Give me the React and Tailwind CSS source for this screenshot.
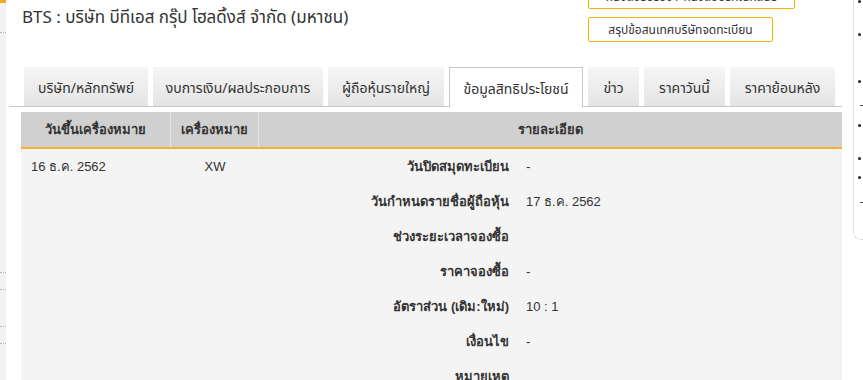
const tabs = [
  { label: 'บริษัท/หลักทรัพย์', w: 'w-[124px]' },
  { label: 'งบการเงิน/ผลประกอบการ', w: 'w-[170px]' },
  { label: 'ผู้ถือหุ้นรายใหญ่', w: 'w-[116px]' },
  { label: 'ข้อมูลสิทธิประโยชน์', w: 'w-[134px]', active: true },
  { label: 'ข่าว', w: 'w-[51px]' },
  { label: 'ราคาวันนี้', w: 'w-[81px]' },
  { label: 'ราคาย้อนหลัง', w: 'w-[105px]' },
]

const details = [
  ['วันปิดสมุดทะเบียน', '-'],
  ['วันกำหนดรายชื่อผู้ถือหุ้น', '17 ธ.ค. 2562'],
  ['ช่วงระยะเวลาจองซื้อ', ''],
  ['ราคาจองซื้อ', '-'],
  ['อัตราส่วน (เดิม:ใหม่)', '10 : 1'],
  ['เงื่อนไข', '-'],
  ['หมายเหตุ', ''],
]

const thaiUi = { fontFamily: "'Noto Sans Thai', 'Noto Sans', 'Liberation Sans', sans-serif" }
const thaiTable = { fontFamily: "Tahoma, 'Liberation Sans', 'DejaVu Sans', sans-serif" }

function LeftRail() {
  return (
    <div className="relative flex w-[6px] shrink-0 flex-col bg-[#f2f2f2]">
      <div className="absolute left-0 top-0 h-[3px] w-[6px] bg-[#f5a623]" />
      <div className="h-[33px] shrink-0 border-b border-dotted border-[#bbb]" />
      <div className="relative h-[240px] shrink-0 border-b border-dotted border-[#bbb]">
        <span className="absolute left-[-9px] top-[189px] text-[12px] leading-none text-black" style={thaiTable}>
          บ
        </span>
      </div>
      <div className="h-[17px] shrink-0 border-b border-dotted border-[#bbb]" />
      <div className="h-[37px] shrink-0 border-b border-dotted border-[#bbb]" />
      <div className="h-[17px] shrink-0 border-b border-dotted border-[#bbb]" />
    </div>
  )
}

function RightRail() {
  const dots = [0, 33, 80, 124, 157, 176]
  return (
    <div className="flex flex-1 items-start pl-[5px]">
      <div className="relative h-[240px] flex-1 rounded-bl-[8px] border-b border-l border-dotted border-[#c8c8c8]">
        {dots.map((y) => (
          <span key={y} className="absolute left-[4px] h-[3px] w-[3px] rounded-full bg-[#223]" style={{ top: y }} />
        ))}
        <span className="absolute left-[6px] top-[105px] h-px w-[3px] bg-[#555]" />
        <span className="absolute left-[6px] top-[202px] h-px w-[3px] bg-[#555]" />
      </div>
    </div>
  )
}

export default function App() {
  return (
    <div className="flex h-[380px] w-[863px] overflow-hidden bg-white text-[#333]">
      <LeftRail />

      <div className="flex w-[842px] shrink-0 flex-col">
        <div className="flex h-[67px] shrink-0 items-start">
          <h1 className="pl-[16px] pt-[8px] text-[17px] font-normal leading-[20px] text-[#333]" style={thaiUi}>
            BTS : บริษัท บีทีเอส กรุ๊ป โฮลดิ้งส์ จำกัด (มหาชน)
          </h1>
          <div className="ml-auto mr-[53px] -mt-[16px] flex flex-col items-start gap-[8px]" style={thaiUi}>
            <div className="flex h-[25px] w-[207px] items-center justify-center rounded-[2px] border border-[#f0b400] text-[12px] text-[#333]">
              หนังสือรับรอง / หนังสือบริคณห์สนธิ
            </div>
            <div className="flex h-[25px] w-[185px] items-center justify-center rounded-[2px] border border-[#f0b400] text-[12px] text-[#333]">
              สรุปข้อสนเทศบริษัทจดทะเบียน
            </div>
          </div>
        </div>

        <div className="ml-[3px] flex w-[833px] shrink-0 gap-[5px] border-b border-[#c8c8c8] pl-[15px]" style={thaiUi}>
          {tabs.map((t) =>
            t.active ? (
              <div
                key={t.label}
                className={`${t.w} -mb-px flex h-[40px] items-center justify-center border border-b-0 border-[#c8c8c8] bg-white pt-[4px] text-[14px] text-[#333]`}
              >
                {t.label}
              </div>
            ) : (
              <div
                key={t.label}
                className={`${t.w} flex h-[39px] items-center justify-center bg-gradient-to-b from-[#f6f6f6] to-[#e4e4e4] pt-[4px] text-[14px] text-[#333]`}
              >
                {t.label}
              </div>
            ),
          )}
        </div>

        <div className="ml-[15px] mt-[5px] w-[821px] shrink-0 grow bg-[#f4f4f4] text-[13px] text-[#333]" style={thaiTable}>
          <div className="flex h-[37px] border-b-2 border-[#fbae2c] bg-[#d0d0d0] font-bold">
            <div className="flex w-[150px] items-center justify-center border-r border-[#e4e4e4]">วันขึ้นเครื่องหมาย</div>
            <div className="flex w-[88px] items-center justify-center border-r border-[#e4e4e4]">เครื่องหมาย</div>
            <div className="flex flex-1 items-center justify-center">รายละเอียด</div>
          </div>

          <div className="flex">
            <div className="flex h-[35px] w-[150px] items-center pl-[10px]">16 ธ.ค. 2562</div>
            <div className="flex h-[35px] w-[88px] items-center justify-center">XW</div>
            <div className="flex flex-1 flex-col">
              {details.map(([label, value]) => (
                <div key={label} className="flex h-[35px] shrink-0 items-center">
                  <div className="w-[250px] text-right font-bold">{label}</div>
                  <div className="pl-[17px]">{value}</div>
                </div>
              ))}
            </div>
          </div>
        </div>
      </div>

      <RightRail />
    </div>
  )
}
